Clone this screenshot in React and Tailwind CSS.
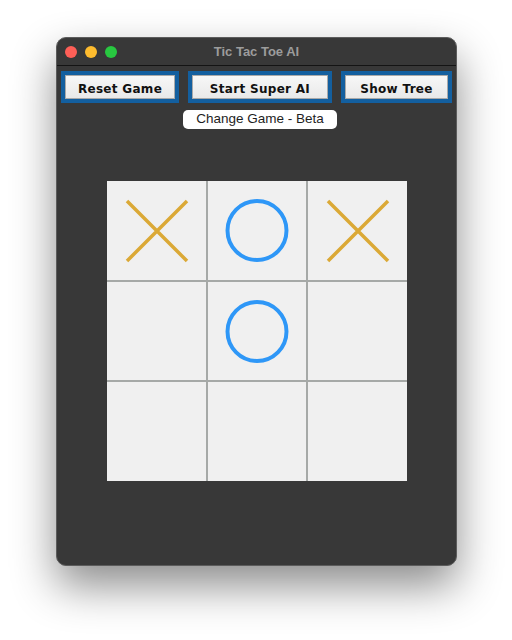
const board = [
  ['x', 'o', 'x'],
  ['', 'o', ''],
  ['', '', ''],
]

function Mark({ v }) {
  if (v === 'x') {
    return (
      <svg width="99" height="99" viewBox="0 0 99 99">
        <path d="M20 20 L80 80 M80 20 L20 80" stroke="#dba936" strokeWidth="3.5" />
      </svg>
    )
  }
  if (v === 'o') {
    return (
      <svg width="99" height="99" viewBox="0 0 99 99">
        <circle cx="49.5" cy="49.5" r="29.8" fill="none" stroke="#2e97f7" strokeWidth="4" />
      </svg>
    )
  }
  return null
}

function GameButton({ label, w }) {
  return (
    <div className={`${w} h-[32px] border-4 border-[#135f9f] bg-[#135f9f]`}>
      <div className="h-full border border-[#a9a9a9] bg-gradient-to-b from-[#f7f7f7] to-[#e9e9e9] flex items-center justify-center pt-[3px] text-[12px] font-bold text-[#111] font-['DejaVu_Sans',sans-serif] tracking-[0.3px]">
        {label}
      </div>
    </div>
  )
}

export default function App() {
  return (
    <div className="w-[512px] h-[640px] bg-white pt-[37px] pl-[56px]">
      <div className="w-[401px] h-[529px] rounded-[10px] border border-[#5c5c5c] bg-[#383838] overflow-hidden flex flex-col shadow-[0_20px_44px_rgba(0,0,0,0.45)]">
        {/* title bar */}
        <div className="h-[28px] shrink-0 flex items-center relative border-b border-[#141414]">
          <div className="flex gap-[8px] pl-[8px]">
            <span className="w-[12px] h-[12px] rounded-full bg-[#fe5f57]" />
            <span className="w-[12px] h-[12px] rounded-full bg-[#febc2e]" />
            <span className="w-[12px] h-[12px] rounded-full bg-[#28c840]" />
          </div>
          <span className="absolute inset-0 flex items-center justify-center text-[13px] font-bold text-[#9c9c9c] font-['Liberation_Sans',sans-serif]">
            Tic Tac Toe AI
          </span>
        </div>

        <div className="flex justify-between px-[4px] pt-[5px]">
          <GameButton label="Reset Game" w="w-[118px]" />
          <GameButton label="Start Super AI" w="w-[144px]" />
          <GameButton label="Show Tree" w="w-[111px]" />
        </div>

        <div className="flex justify-center pt-[7px] pl-[7px]">
          <div className="w-[154px] h-[19px] rounded-[5px] bg-white flex items-center justify-center text-[13.5px] text-[#1e1e1e] font-['Liberation_Sans',sans-serif]">
            Change Game - Beta
          </div>
        </div>

        <div className="flex justify-center pt-[52px]">
          <div className="grid grid-cols-[99px_98px_99px] grid-rows-[99px_98px_99px] gap-[2px] bg-[#a6a9a7]">
            {board.flat().map((v, i) => (
              <div key={i} className="bg-[#f0f0f0] flex items-center justify-center overflow-hidden">
                <Mark v={v} />
              </div>
            ))}
          </div>
        </div>
      </div>
    </div>
  )
}
